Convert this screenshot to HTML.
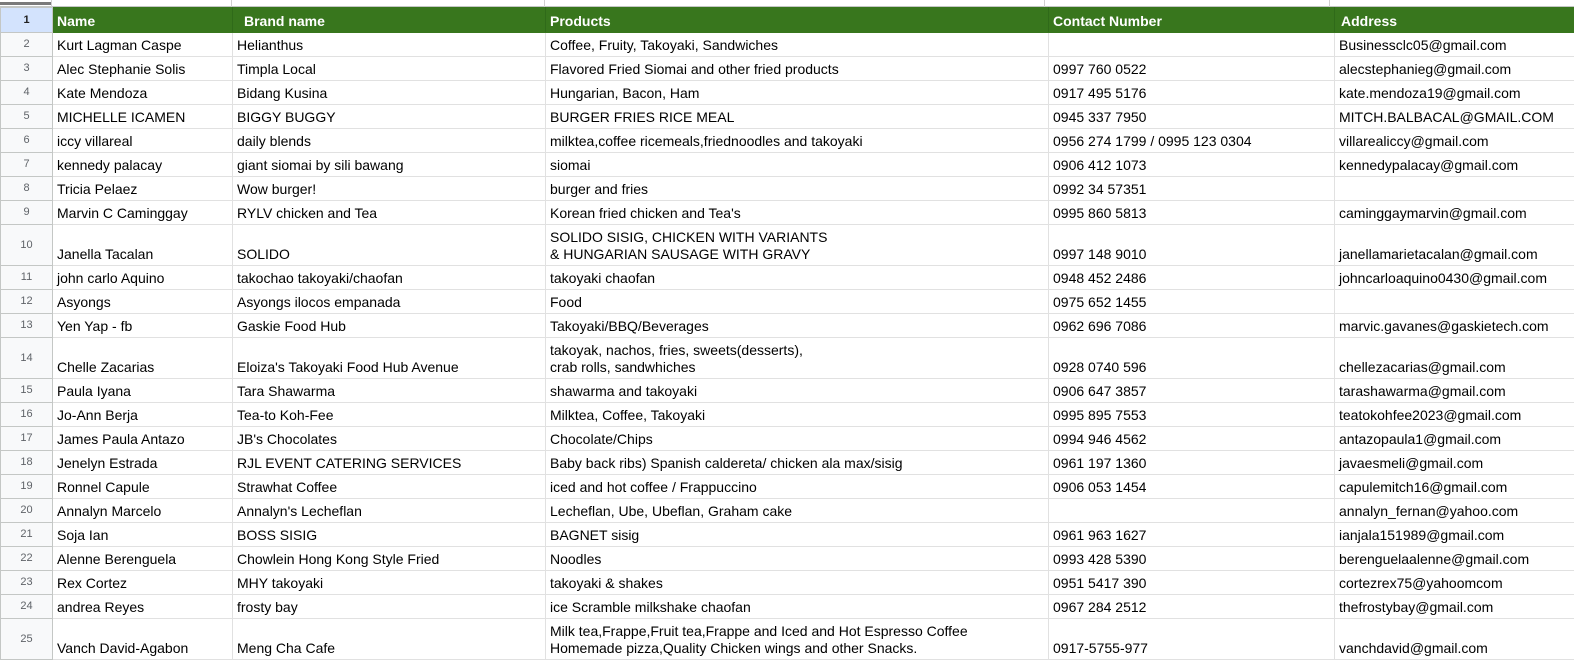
<!DOCTYPE html>
<html><head><meta charset="utf-8"><style>
body{margin:0;background:#fff;font-family:"Liberation Sans",Arial,sans-serif;width:1574px;height:660px;overflow:hidden;position:relative}
.top{position:absolute;left:0;top:0;width:1574px;height:7px;border-bottom:1px solid #c4c7c5;box-sizing:border-box}
.top .bar{position:absolute;left:0;top:2px;width:51px;height:3px;background:#7a7a7a}
.top .v{position:absolute;top:0;width:1px;height:7px;background:#d0d0d0}
table{position:absolute;left:0;top:7px;border-collapse:collapse;table-layout:fixed;width:1582px}
td{border:1px solid #e1e1e1;padding:0 4px 2px 4px;font-size:14px;line-height:17px;vertical-align:bottom;white-space:nowrap;overflow:hidden;color:#000;box-sizing:border-box}
td.n{background:#f8f9fa;color:#5f6368;font-size:11px;text-align:center;vertical-align:middle;padding:0;border-color:#c4c7c5}
tr.h td{background:#38761d;color:#fff;font-weight:bold;border-color:#38761d;border-right-color:#2f6a19}
tr.h td.n{background:#d3e3fd;color:#1f1f1f;font-weight:bold;border-color:#c4c7c5}
tr{height:24px}
tr.t{height:41px}
</style></head><body>
<div class="top"><div class="bar"></div><div class="v" style="left:51px"></div><div class="v" style="left:231px"></div><div class="v" style="left:544px"></div><div class="v" style="left:1044px"></div><div class="v" style="left:1329px"></div></div>
<table>
<colgroup><col style="width:52px"><col style="width:180px"><col style="width:313px"><col style="width:503px"><col style="width:286px"><col style="width:248px"></colgroup>
<tr class="h" style="height:25px"><td class="n">1</td><td>Name</td><td style="padding-left:11px">Brand name</td><td>Products</td><td>Contact Number</td><td style="padding-left:6px">Address</td></tr>
<tr><td class="n">2</td><td>Kurt Lagman Caspe</td><td>Helianthus</td><td>Coffee, Fruity, Takoyaki, Sandwiches</td><td></td><td>Businessclc05@gmail.com</td></tr>
<tr><td class="n">3</td><td>Alec Stephanie Solis</td><td>Timpla Local</td><td>Flavored Fried Siomai and other fried products</td><td>0997 760 0522</td><td>alecstephanieg@gmail.com</td></tr>
<tr><td class="n">4</td><td>Kate Mendoza</td><td>Bidang Kusina</td><td>Hungarian, Bacon, Ham</td><td>0917 495 5176</td><td>kate.mendoza19@gmail.com</td></tr>
<tr><td class="n">5</td><td>MICHELLE ICAMEN</td><td>BIGGY BUGGY</td><td>BURGER FRIES RICE MEAL</td><td>0945 337 7950</td><td>MITCH.BALBACAL@GMAIL.COM</td></tr>
<tr><td class="n">6</td><td>iccy villareal</td><td>daily blends</td><td>milktea,coffee ricemeals,friednoodles and takoyaki</td><td>0956 274 1799 / 0995 123 0304</td><td>villarealiccy@gmail.com</td></tr>
<tr><td class="n">7</td><td>kennedy palacay</td><td>giant siomai by sili bawang</td><td>siomai</td><td>0906 412 1073</td><td>kennedypalacay@gmail.com</td></tr>
<tr><td class="n">8</td><td>Tricia Pelaez</td><td>Wow burger!</td><td>burger and fries</td><td>0992 34 57351</td><td></td></tr>
<tr><td class="n">9</td><td>Marvin C Caminggay</td><td>RYLV chicken and Tea</td><td>Korean fried chicken and Tea's</td><td>0995 860 5813</td><td>caminggaymarvin@gmail.com</td></tr>
<tr class="t"><td class="n">10</td><td>Janella Tacalan</td><td>SOLIDO</td><td>SOLIDO SISIG, CHICKEN WITH VARIANTS<br>&amp; HUNGARIAN SAUSAGE WITH GRAVY</td><td>0997 148 9010</td><td>janellamarietacalan@gmail.com</td></tr>
<tr><td class="n">11</td><td>john carlo Aquino</td><td>takochao takoyaki/chaofan</td><td>takoyaki chaofan</td><td>0948 452 2486</td><td>johncarloaquino0430@gmail.com</td></tr>
<tr><td class="n">12</td><td>Asyongs</td><td>Asyongs ilocos empanada</td><td>Food</td><td>0975 652 1455</td><td></td></tr>
<tr><td class="n">13</td><td>Yen Yap - fb</td><td>Gaskie Food Hub</td><td>Takoyaki/BBQ/Beverages</td><td>0962 696 7086</td><td>marvic.gavanes@gaskietech.com</td></tr>
<tr class="t"><td class="n">14</td><td>Chelle Zacarias</td><td>Eloiza's Takoyaki Food Hub Avenue</td><td>takoyak, nachos, fries, sweets(desserts),<br>crab rolls, sandwhiches</td><td>0928 0740 596</td><td>chellezacarias@gmail.com</td></tr>
<tr><td class="n">15</td><td>Paula Iyana</td><td>Tara Shawarma</td><td>shawarma and takoyaki</td><td>0906 647 3857</td><td>tarashawarma@gmail.com</td></tr>
<tr><td class="n">16</td><td>Jo-Ann Berja</td><td>Tea-to Koh-Fee</td><td>Milktea, Coffee, Takoyaki</td><td>0995 895 7553</td><td>teatokohfee2023@gmail.com</td></tr>
<tr><td class="n">17</td><td>James Paula Antazo</td><td>JB's Chocolates</td><td>Chocolate/Chips</td><td>0994 946 4562</td><td>antazopaula1@gmail.com</td></tr>
<tr><td class="n">18</td><td>Jenelyn Estrada</td><td>RJL EVENT CATERING SERVICES</td><td>Baby back ribs) Spanish caldereta/ chicken ala max/sisig</td><td>0961 197 1360</td><td>javaesmeli@gmail.com</td></tr>
<tr><td class="n">19</td><td>Ronnel Capule</td><td>Strawhat Coffee</td><td>iced and hot coffee / Frappuccino</td><td>0906 053 1454</td><td>capulemitch16@gmail.com</td></tr>
<tr><td class="n">20</td><td>Annalyn Marcelo</td><td>Annalyn's Lecheflan</td><td>Lecheflan, Ube, Ubeflan, Graham cake</td><td></td><td>annalyn_fernan@yahoo.com</td></tr>
<tr><td class="n">21</td><td>Soja Ian</td><td>BOSS SISIG</td><td>BAGNET sisig</td><td>0961 963 1627</td><td>ianjala151989@gmail.com</td></tr>
<tr><td class="n">22</td><td>Alenne Berenguela</td><td>Chowlein Hong Kong Style Fried</td><td>Noodles</td><td>0993 428 5390</td><td>berenguelaalenne@gmail.com</td></tr>
<tr><td class="n">23</td><td>Rex Cortez</td><td>MHY takoyaki</td><td>takoyaki &amp; shakes</td><td>0951 5417 390</td><td>cortezrex75@yahoomcom</td></tr>
<tr><td class="n">24</td><td>andrea Reyes</td><td>frosty bay</td><td>ice Scramble milkshake chaofan</td><td>0967 284 2512</td><td>thefrostybay@gmail.com</td></tr>
<tr class="t"><td class="n">25</td><td>Vanch David-Agabon</td><td>Meng Cha Cafe</td><td>Milk tea,Frappe,Fruit tea,Frappe and Iced and Hot Espresso Coffee<br>Homemade pizza,Quality Chicken wings and other Snacks.</td><td>0917-5755-977</td><td>vanchdavid@gmail.com</td></tr>
</table>
</body></html>
